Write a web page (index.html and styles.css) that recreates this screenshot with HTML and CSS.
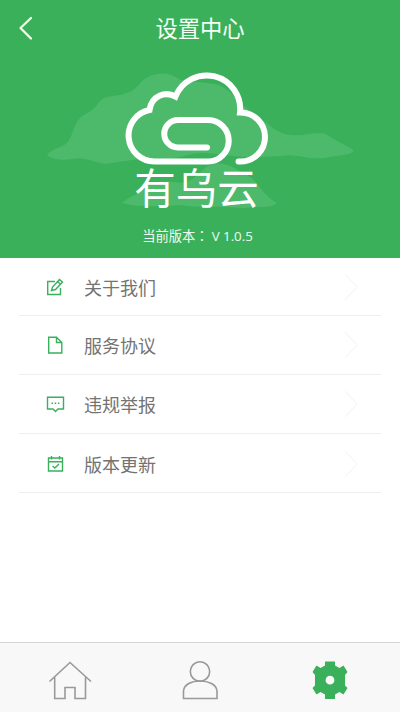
FILE: index.html
```html
<!DOCTYPE html>
<html lang="zh-CN">
<head>
<meta charset="utf-8">
<title>设置中心</title>
<link rel="stylesheet" href="styles.css">
</head>
<body>
<div class="screen">
  <section class="hero">
    <header class="topbar">
      <svg class="back" width="16" height="26" viewBox="0 0 16 26"><path d="M14 3 3.500 13 14 23.500"/></svg>
      <h1 class="title">设置中心</h1>
    </header>
    <svg class="art" width="400" height="108" viewBox="0 60 400 108">
      <path class="haze" d="M47 155C53 148 61 148 67 143C72 138 74 123 81 117C86 113 92 112 97 105C104 93 116 98 126 93C136 92 138 82 148 77C160 71 172 73 180 80L215 84C232 88 240 106 252 112C264 119 271 130 285 134C300 138 314 131 326 134C335 141 347 145 354 151C349 156 337 155 325 158C307 160 296 153 280 156L260 157C240 158 226 154 205 153C190 152 177 160 160 160C142 157 120 162 106 164C93 162 82 156 73 159C63 161 50 159 47 155Z"/>
      <path class="haze" d="M122 203C130 196 139 194 146 188C154 180 168 181 180 183C197 181 200 169 211 165C222 160 236 168 244 174C258 178 260 194 277 203C270 209 255 206 244 208C220 206 198 208 180 205C156 207 136 207 122 203Z"/>
      <path class="cloud" d="M238.500 161.500H240.500A24.500 24.500 0 0 0 240.500 112.500H240A33.550 33.550 0 0 0 175.500 96.500C165.500 91 151.500 95.500 149.500 110A26 26 0 0 0 154.500 161.500H208A20.750 20.750 0 0 0 208 120H178A13.750 13.750 0 0 0 178 147.500H207"/>
    </svg>
    <h2 class="brand">有乌云</h2>
    <p class="version">当前版本<span class="colon" lang="zh-TW">：</span><span class="num">V 1.0.5</span></p>
  </section>
  <ul class="menu">
    <li class="item">
      <svg class="icon" width="20" height="20" viewBox="0 0 20 20"><path d="M10 4.500H2.700V17.500H15.500V11M6.500 13.500 7.500 10 14.500 2.500 17.500 5 10.500 12.500ZM12.500 4.500 15.500 7.200"/></svg>
      <span class="label">关于我们</span>
      <svg class="arrow" width="14" height="28" viewBox="0 0 14 28"><path d="M1 1 13 14 1 27"/></svg>
    </li>
    <li class="item">
      <svg class="icon" width="20" height="20" viewBox="0 0 20 20"><path d="M3.700 2.300H11.500L16.800 7.500V18H3.700ZM11.500 2.500V7.500H16.500"/></svg>
      <span class="label">服务协议</span>
      <svg class="arrow" width="14" height="28" viewBox="0 0 14 28"><path d="M1 1 13 14 1 27"/></svg>
    </li>
    <li class="item report">
      <svg class="icon" width="20" height="20" viewBox="0 0 20 20"><path d="M2.500 3.300H18.500V15H13L10.500 17.500 8 15H2.500Z"/><path class="dots" d="M6.500 9.200H14.500"/></svg>
      <span class="label">违规举报</span>
      <svg class="arrow" width="14" height="28" viewBox="0 0 14 28"><path d="M1 1 13 14 1 27"/></svg>
    </li>
    <li class="item update">
      <svg class="icon" width="20" height="20" viewBox="0 0 20 20"><path d="M3.500 4H17.500V17H3.500ZM3.500 7.700H17.500M6.500 2V5.500M14.500 2V5.500M7.500 12 9.800 14 14 10"/></svg>
      <span class="label">版本更新</span>
      <svg class="arrow" width="14" height="28" viewBox="0 0 14 28"><path d="M1 1 13 14 1 27"/></svg>
    </li>
  </ul>
  <nav class="tabs">
    <svg class="tab" width="44" height="42" viewBox="0 0 44 42"><path d="M1.500 21.500 22 2.500 43 21.500M6.700 17.500V38.500H17V27.500H27V38.500H37.500V17.500"/></svg>
    <svg class="tab" width="44" height="42" viewBox="0 0 44 42"><circle cx="22" cy="11.500" r="9.700"/><path d="M5.500 38.500V31C6 24.500 13.500 21 22 21S38.500 24.500 39 31V38.500Z"/></svg>
    <svg class="tab active" width="44" height="42" viewBox="0 0 44 42"><path fill-rule="evenodd" d="M17 1.500H27V5.500L31.500 8 35.500 5.500 39.500 12 37 15V25.500L39.500 28 35.500 34.500 31.500 32 27 34.500V39H17V34.500L12.500 32 8.500 34.500 4.500 28 7 25.500V15L4.500 12 8.500 5.500 12.500 8 17 5.500ZM22 15.800A4.400 4.400 0 1 0 22 24.600A4.400 4.400 0 1 0 22 15.800Z"/></svg>
  </nav>
</div>
</body>
</html>
```
FILE: styles.css
```css
* {
  box-sizing: border-box;
  margin: 0;
  padding: 0;
}

body {
  background: #fff;
  font-family: "Noto Sans CJK SC", sans-serif;
}

.screen {
  display: flex;
  flex-direction: column;
  width: 400px;
  height: 712px;
  overflow: hidden;
}

.hero {
  height: 258px;
  flex: none;
  background: #3ab05b;
  color: #fff;
  text-align: center;
}

.topbar {
  display: grid;
  grid-template-columns: 40px 1fr 40px;
  align-items: center;
  height: 60px;
  padding-bottom: 4px;
}

.back {
  margin-left: 17px;
  fill: none;
  stroke: #f3ffe9;
  stroke-width: 2.3;
  stroke-linecap: round;
  stroke-linejoin: round;
}

.title {
  padding-bottom: 2px;
  color: #f5fff3;
  font-size: 22.300px;
  font-weight: 400;
  line-height: 32px;
}

.art {
  display: block;
  overflow: visible;
}

.haze {
  fill: #4dba6b;
}

.cloud {
  fill: none;
  stroke: #fff;
  stroke-width: 6;
  stroke-linecap: round;
  stroke-linejoin: miter;
}

.brand {
  position: relative;
  height: 39px;
  padding-right: 7px;
  font-size: 41.500px;
  font-weight: 400;
  line-height: 37px;
}

.version {
  margin-top: 19px;
  padding-right: 5px;
  color: #f0fbf0;
  font-size: 13.300px;
  font-weight: 400;
  line-height: 20px;
}

.colon {
  margin-right: 3px;
  font-family: "Noto Sans CJK TC", sans-serif;
}

.num {
  font-family: "Open Sans", sans-serif;
}

.menu {
  flex: 1;
  padding: 0 19px;
  list-style: none;
}

.item {
  display: flex;
  align-items: center;
  height: 59px;
  padding: 0 23px 0 26px;
  border-bottom: 1px solid #efefef;
}

.item:first-child {
  height: 58px;
}

.report {
  padding-bottom: 1px;
}

.update {
  padding-top: 2px;
}

.icon {
  fill: none;
  stroke: #39b15c;
  stroke-width: 1.4;
}

.dots {
  stroke-width: 1.5;
  stroke-dasharray: 1.500 1.700;
}

.label {
  flex: 1;
  margin-left: 19px;
  color: #737373;
  font-size: 18px;
  font-weight: 400;
  line-height: 28px;
}

.arrow {
  fill: none;
  stroke: #f7f7f7;
  stroke-width: 1.2;
}

.tabs {
  display: grid;
  grid-template-columns: repeat(3, 130px);
  justify-content: center;
  justify-items: center;
  height: 70px;
  padding-top: 17px;
  background: #f8f8f8;
  border-top: 1px solid #d6d6d6;
}

.tab {
  fill: none;
  stroke: #999;
  stroke-width: 1.6;
}

.active {
  fill: #3ab05b;
  stroke: none;
}
```
